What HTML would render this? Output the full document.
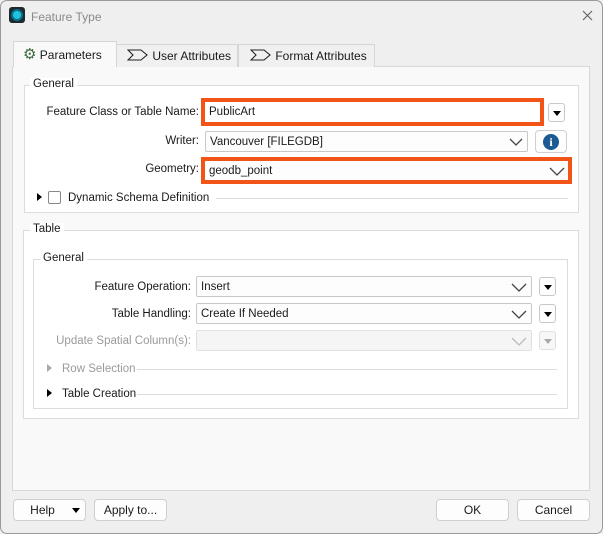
<!DOCTYPE html>
<html><head><style>
*{box-sizing:border-box;margin:0;padding:0}
body{width:603px;height:534px;background:#efefef;font-family:"Liberation Sans",sans-serif;font-size:11.5px;color:#1a1a1a;position:relative;overflow:hidden}
.a{position:absolute}
.win{left:0;top:0;width:603px;height:534px;border:1px solid #9a9a9a;border-radius:7px;background:#efefef}
.panel{left:12px;top:66px;width:578px;height:425px;background:#f9f9f9;border:1px solid #d8d8d8}
.tab{top:44px;height:23px;border:1px solid #d6d6d6;border-bottom:none;background:#f0f0f0;font-size:12px;line-height:22px}
.grp{background:#fff;border:1px solid #dcdcdc}
.lbl{font-size:11.5px;white-space:nowrap}
.r{text-align:right}
.combo{background:#fdfdfd;border:1px solid #c8c8c8;border-radius:2px;height:21px;line-height:21px;padding-left:4px;font-size:11.5px}
.combo.dis{background:#f5f5f5;border-color:#e0e0e0}
.chev{position:absolute;right:4px;top:6px}
.btn{background:#fdfdfd;border:1px solid #cfcfcf;border-radius:4px;text-align:center;font-size:12px}
.sb{width:17px;height:19px;background:#fdfdfd;border:1px solid #c8c8c8;border-radius:3px}
.tri{position:absolute;left:4px;top:7px;width:0;height:0;border-left:4px solid transparent;border-right:4px solid transparent;border-top:5px solid #000}
.line{height:1px;background:#dcdcdc}
.rt{width:0;height:0;border-top:4px solid transparent;border-bottom:4px solid transparent;border-left:5px solid #000}
</style></head><body>
<div class="a win"></div>
<div class="a" style="left:9px;top:7px;width:16px;height:16px;background:#1a2a30;border-radius:3px"></div>
<div class="a" style="left:11px;top:9px;width:12px;height:12px;border-radius:50%;background:#1fc3e0;border:2px solid #0a6f86"></div>
<div class="a" style="left:31px;top:10px;font-size:12px;color:#8a8a8a">Feature Type</div>
<svg class="a" style="left:582px;top:10px" width="11" height="11"><path d="M1 1L10 10M10 1L1 10" stroke="#666" stroke-width="1.2"/></svg>
<div class="a panel"></div>
<div class="a tab" style="left:116px;width:122px;padding-left:10px"><svg width="22" height="12" style="vertical-align:-1px"><path d="M1 1H14L20 6L14 11H1L6 6Z" fill="none" stroke="#222" stroke-width="1.1"/></svg> User Attributes</div>
<div class="a tab" style="left:238px;width:137px;padding-left:11px"><svg width="22" height="12" style="vertical-align:-1px"><path d="M1 1H14L20 6L14 11H1L6 6Z" fill="none" stroke="#222" stroke-width="1.1"/></svg> Format Attributes</div>
<div class="a tab" style="left:13px;top:41px;height:26px;width:104px;background:#f9f9f9;padding-left:9px;line-height:26px"><span style="color:#3a6a3a;font-size:15px">⚙</span> Parameters</div>
<div class="a grp" style="left:24px;top:85px;width:555px;height:128px"></div>
<div class="a lbl" style="left:30px;top:78px;background:#fff;padding:0 3px">General</div>
<div class="a lbl r" style="left:20px;width:179px;top:106px">Feature Class or Table Name:</div>
<div class="a" style="left:201px;top:98px;width:343px;height:28px;border:4px solid #f25417;background:#fff;padding-left:4px;line-height:21px">PublicArt</div>
<div class="a sb" style="left:548px;top:103px"><div class="tri"></div></div>
<div class="a lbl r" style="left:100px;width:99px;top:135px">Writer:</div>
<div class="a combo" style="left:205px;top:131px;width:323px">Vancouver [FILEGDB]<svg class="chev" width="14" height="9"><path d="M1 1L7 7L13 1" fill="none" stroke="#444" stroke-width="1.3"/></svg></div>
<div class="a btn" style="left:535px;top:130px;width:32px;height:23px"><div style="margin:3px auto;width:16px;height:16px;border-radius:50%;background:#1c5a94;color:#fff;font-weight:bold;font-size:12px;line-height:16px;font-family:'Liberation Serif',serif">i</div></div>
<div class="a lbl r" style="left:100px;width:99px;top:163px">Geometry:</div>
<div class="a" style="left:201px;top:157px;width:371px;height:27px;border:4px solid #f25417;background:#fdfdfd;padding-left:4px;line-height:20px">geodb_point<svg class="chev" width="16" height="9" style="top:6px;right:3px"><path d="M1 1L8 8L15 1" fill="none" stroke="#444" stroke-width="1.3"/></svg></div>
<div class="a rt" style="left:37px;top:193px"></div>
<div class="a" style="left:48px;top:191px;width:13px;height:13px;border:1px solid #888;border-radius:2px;background:#fff"></div>
<div class="a lbl" style="left:68px;top:192px">Dynamic Schema Definition</div>
<div class="a line" style="left:216px;top:198px;width:352px"></div>
<div class="a grp" style="left:23px;top:230px;width:556px;height:189px"></div>
<div class="a lbl" style="left:30px;top:223px;background:#fff;padding:0 3px">Table</div>
<div class="a grp" style="left:33px;top:259px;width:535px;height:150px"></div>
<div class="a lbl" style="left:40px;top:252px;background:#fff;padding:0 3px">General</div>
<div class="a lbl r" style="left:40px;width:151px;top:281px">Feature Operation:</div>
<div class="a combo" style="left:196px;top:276px;width:336px">Insert<svg class="chev" width="16" height="9"><path d="M1 1L8 8L15 1" fill="none" stroke="#444" stroke-width="1.3"/></svg></div>
<div class="a sb" style="left:539px;top:277px"><div class="tri"></div></div>
<div class="a lbl r" style="left:40px;width:151px;top:308px">Table Handling:</div>
<div class="a combo" style="left:196px;top:303px;width:336px">Create If Needed<svg class="chev" width="16" height="9"><path d="M1 1L8 8L15 1" fill="none" stroke="#444" stroke-width="1.3"/></svg></div>
<div class="a sb" style="left:539px;top:304px"><div class="tri"></div></div>
<div class="a lbl r" style="left:40px;width:151px;top:335px;color:#9a9a9a">Update Spatial Column(s):</div>
<div class="a combo dis" style="left:196px;top:330px;width:336px"><svg class="chev" width="16" height="9"><path d="M1 1L8 8L15 1" fill="none" stroke="#bbb" stroke-width="1.3"/></svg></div>
<div class="a sb" style="left:539px;top:331px;border-color:#e0e0e0;background:#f7f7f7"><div class="tri" style="border-top-color:#aaa"></div></div>
<div class="a rt" style="left:47px;top:364px;border-left-color:#aaa"></div>
<div class="a lbl" style="left:62px;top:363px;color:#9a9a9a">Row Selection</div>
<div class="a line" style="left:137px;top:369px;width:420px"></div>
<div class="a rt" style="left:47px;top:389px"></div>
<div class="a lbl" style="left:62px;top:388px">Table Creation</div>
<div class="a line" style="left:137px;top:394px;width:420px"></div>
<div class="a btn" style="left:13px;top:499px;width:73px;height:22px;line-height:20px;padding-right:14px">Help</div>
<div class="a tri" style="left:72px;top:508px;border-left-width:4px;border-right-width:4px"></div>
<div class="a btn" style="left:94px;top:499px;width:73px;height:22px;line-height:20px">Apply to...</div>
<div class="a btn" style="left:436px;top:499px;width:73px;height:22px;line-height:20px">OK</div>
<div class="a btn" style="left:517px;top:499px;width:73px;height:22px;line-height:20px">Cancel</div>
</body></html>
